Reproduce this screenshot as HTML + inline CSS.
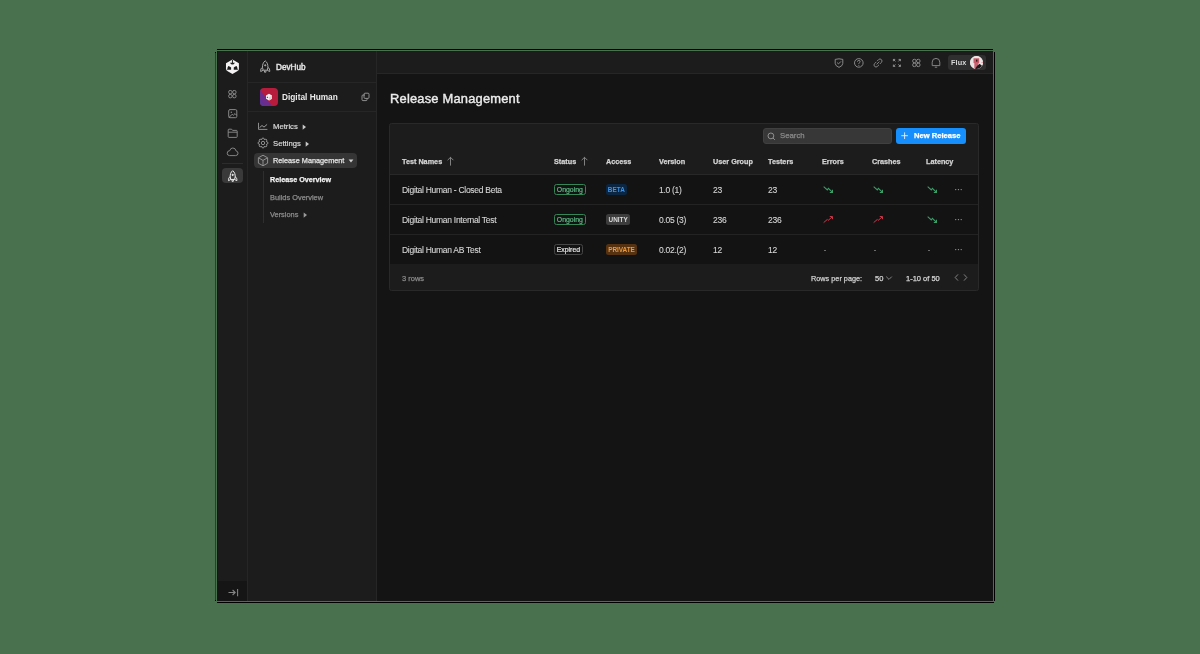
<!DOCTYPE html>
<html><head><meta charset="utf-8">
<style>
*{margin:0;padding:0;box-sizing:border-box}
html,body{width:1200px;height:654px;overflow:hidden;background:#49714d;font-family:"Liberation Sans",sans-serif;}
.a{position:absolute}
.ln{position:absolute;background:#000}
#panel{position:absolute;left:217px;top:51px;width:776px;height:550px;background:#1c1c1c;overflow:hidden}
.t{position:absolute;white-space:nowrap;line-height:1;will-change:transform;-webkit-text-stroke:0.25px currentColor}
svg{position:absolute;overflow:visible}
.hd{font-size:7.25px;font-weight:bold;color:#d4d4d4}
.rw{font-size:8.5px;letter-spacing:-0.28px;color:#d6d6d6;-webkit-text-stroke:0.1px currentColor}
.bd{position:absolute;border-radius:2.5px;font-size:6.9px;line-height:9px;text-align:center;white-space:nowrap;will-change:transform;-webkit-text-stroke:0.2px currentColor}
.bd2{position:absolute;border-radius:2.5px;font-size:6.4px;font-weight:bold;line-height:11px;text-align:center;white-space:nowrap;will-change:transform}
</style></head>
<body>
<!-- frame lines -->
<div class="ln" style="left:217px;top:49px;width:776px;height:1px"></div>
<div class="ln" style="left:217px;top:602px;width:777px;height:1px"></div>
<div class="ln" style="left:215px;top:52px;width:1px;height:549px;background:#383838"></div>
<div class="ln" style="left:215px;top:52px;width:1px;height:1px"></div>
<div class="ln" style="left:215px;top:600px;width:1px;height:1px"></div>
<div class="ln" style="left:994px;top:52px;width:1px;height:549px"></div>

<div id="panel">
  <!-- rail -->
  <div class="a" style="left:0;top:0;width:30px;height:550px;background:#1c1c1c"></div>
  <div class="a" style="left:30px;top:0;width:1px;height:550px;background:#262626"></div>
  <div class="a" style="left:0;top:530px;width:30px;height:20px;background:#151515"></div>
  <div class="a" style="left:0;top:0;width:1px;height:550px;background:#171717"></div>
  <div class="a" style="left:775px;top:0;width:1px;height:550px;background:#101010"></div>
  <!-- sidebar -->
  <div class="a" style="left:31px;top:0;width:128px;height:550px;background:#1c1c1c"></div>
  <div class="a" style="left:159px;top:0;width:1px;height:550px;background:#262626"></div>
  <div class="a" style="left:31px;top:31px;width:128px;height:1px;background:#262626"></div>
  <div class="a" style="left:31px;top:60px;width:128px;height:1px;background:#262626"></div>
  <!-- main -->
  <div class="a" style="left:160px;top:0;width:616px;height:550px;background:#141414"></div>
  <div class="a" style="left:160px;top:0;width:616px;height:22px;background:#1c1c1c"></div>
  <div class="a" style="left:160px;top:22px;width:616px;height:1px;background:#262626"></div>
</div>

<!-- ===== RAIL ICONS ===== -->
<svg class="a" style="left:222px;top:56px" width="22" height="22" viewBox="0 0 22 22">
  <path fill="#f4f2f2" fill-rule="evenodd" d="M10.44 3.6 L16.9 7.25 L16.9 14.15 L10.44 18.1 L3.98 14.15 L3.98 7.25 Z
   M9.95 3.9 L10.93 3.9 L10.93 6.7 L12.9 6.7 Q11.9 8.5 10.44 8.6 Q8.98 8.5 7.98 6.7 L9.95 6.7 Z
   M6.3 9.9 Q8.4 10.4 9.1 11.5 L9.1 13.7 L5.3 13.7 Q5.2 11.6 6.3 9.9 Z
   M14.58 9.9 Q12.48 10.4 11.78 11.5 L11.78 13.7 L15.58 13.7 Q15.68 11.6 14.58 9.9 Z"/>
  <path d="M5.6 13.6 L3.9 14.5 M15.28 13.6 L16.98 14.5" stroke="#1c1c1c" stroke-width="0.7"/>
</svg>
<svg class="a" style="left:227px;top:89px" width="11" height="11" viewBox="0 0 11 11" fill="none" stroke="#8e8e8e" stroke-width="0.95">
  <rect x="1.7" y="1.5" width="3.3" height="3.3" rx="1.3"/><rect x="5.7" y="1.5" width="3.3" height="3.3" rx="1.3"/>
  <rect x="1.7" y="5.5" width="3.3" height="3.3" rx="1.3"/><rect x="5.7" y="5.5" width="3.3" height="3.3" rx="1.3"/>
</svg>
<svg class="a" style="left:227px;top:108px" width="12" height="12" viewBox="0 0 12 12" fill="none" stroke="#8e8e8e" stroke-width="0.95">
  <rect x="1.7" y="1.6" width="8.1" height="8.1" rx="1.3"/>
  <path d="M2 9.4 L5.2 6.2 L6.4 7.2 L8 5.6 L9.6 7.2"/><circle cx="4.3" cy="4.2" r="0.7" fill="#8e8e8e" stroke="none"/>
</svg>
<svg class="a" style="left:227px;top:128px" width="12" height="11" viewBox="0 0 12 11" fill="none" stroke="#8e8e8e" stroke-width="0.9">
  <path d="M1.2 2 Q1.2 1.2 2 1.2 L4.6 1.2 L5.6 2.4 L9.4 2.4 Q10.2 2.4 10.2 3.2 L10.2 8.6 Q10.2 9.4 9.4 9.4 L2 9.4 Q1.2 9.4 1.2 8.6 Z"/>
  <path d="M1.2 4.2 L10.2 4.2"/>
</svg>
<svg class="a" style="left:226px;top:146px" width="13" height="11" viewBox="0 0 13 11" fill="none" stroke="#8e8e8e" stroke-width="0.9">
  <path d="M3.6 9.6 L9.6 9.6 Q12 9.6 12 7.2 Q12 5.2 10 4.9 Q9.6 2 6.8 2 Q4.4 2 3.8 4.6 Q1.2 4.8 1.2 7.2 Q1.2 9.6 3.6 9.6 Z"/>
</svg>
<div class="a" style="left:222px;top:163px;width:21px;height:1px;background:#2c2c2c"></div>
<div class="a" style="left:222px;top:168px;width:21px;height:15px;background:#3a3a3a;border-radius:4px"></div>
<svg class="a" style="left:226px;top:168.5px" width="13" height="14" viewBox="0 0 14 15" fill="none" stroke="#f2f2f2" stroke-width="1.05">
  <path d="M7.2 1.8 C9.4 3.4 10 6 9.9 8.4 L9.3 11.2 L5.1 11.2 L4.5 8.4 C4.4 6 5 3.4 7.2 1.8 Z"/>
  <path d="M4.6 8.2 C3.1 9 2.5 10.6 2.7 12.5 L5.1 11.3"/>
  <path d="M9.8 8.2 C11.3 9 11.9 10.6 11.7 12.5 L9.3 11.3"/>
  <circle cx="7.2" cy="6.3" r="0.7" fill="#f2f2f2"/>
  <path d="M6.5 11.6 L6.5 13.2 L7.9 13.2 L7.9 11.6"/>
</svg>
<svg class="a" style="left:226.5px;top:586.8px" width="13" height="11" viewBox="0 0 13 11" fill="none" stroke="#858585" stroke-width="1.05">
  <path d="M1.5 5.5 L8 5.5 M5.6 3 L8.2 5.5 L5.6 8"/><path d="M10.6 2 L10.6 9.2"/>
</svg>

<!-- ===== SIDEBAR ===== -->
<svg class="a" style="left:258px;top:59px" width="14" height="15" viewBox="0 0 14 15" fill="none" stroke="#b0b0b0" stroke-width="0.95">
  <path d="M7.2 1.8 C9.4 3.4 10 6 9.9 8.4 L9.3 11.2 L5.1 11.2 L4.5 8.4 C4.4 6 5 3.4 7.2 1.8 Z"/>
  <path d="M4.6 8.2 C3.1 9 2.5 10.6 2.7 12.5 L5.1 11.3"/>
  <path d="M9.8 8.2 C11.3 9 11.9 10.6 11.7 12.5 L9.3 11.3"/>
  <circle cx="7.2" cy="6.3" r="0.6" fill="#b0b0b0"/>
  <path d="M6.5 11.6 L6.5 13.2 L7.9 13.2 L7.9 11.6"/>
</svg>
<div class="t" style="left:275.5px;top:64.2px;font-size:8.2px;color:#e2e2e2;-webkit-text-stroke:0.45px #e2e2e2">DevHub</div>

<div class="a" style="left:260px;top:88px;width:18px;height:18px;border-radius:4px;overflow:hidden;background:#b81c3c">
  <svg width="18" height="18" viewBox="0 0 18 18" style="position:absolute;left:0;top:0">
    <polygon points="0,1.5 0,18 11.8,18" fill="#6b2c8c"/>
    <polygon points="0,11 0,18 5,18" fill="#4a3aa0" opacity="0.6"/>
    <polygon points="9,5.8 12,7.4 12,10.8 9,12.4 6,10.8 6,7.4" fill="#f6f0f0"/>
    <polygon points="9,9 12,7.4 12,10.8 9,12.4" fill="#e0d0d0"/>
    <path d="M7.6 8.4 Q6.6 8.6 6.6 9.6 Q7.4 10.4 8.2 9.8 Z" fill="#a81a36"/>
  </svg>
</div>
<div class="t" style="left:282px;top:93px;font-size:8.3px;font-weight:bold;color:#ececec;-webkit-text-stroke:0px">Digital Human</div>
<svg class="a" style="left:360px;top:92px" width="11" height="10" viewBox="0 0 11 10" fill="none" stroke="#9a9a9a" stroke-width="0.9">
  <path d="M5 3 L3 3 Q2 3 2 4 L2 7.6 Q2 8.6 3 8.6 L6 8.6 Q7 8.6 7 7.6 L7 6.4"/>
  <path d="M5 6.4 Q4 6.4 4 5.4 L4 2.2 Q4 1.2 5 1.2 L8 1.2 Q9 1.2 9 2.2 L9 5.4 Q9 6.4 8 6.4 Z"/>
</svg>

<svg class="a" style="left:257px;top:121px" width="12" height="10" viewBox="0 0 12 10" fill="none" stroke="#9a9a9a" stroke-width="0.9">
  <path d="M1.5 1.8 L1.5 8.4 L10.4 8.4"/><path d="M2.6 6.6 L5 4.5 L7 6.1 L10.1 3.4" stroke-width="1"/>
</svg>
<div class="t" style="left:273px;top:123.3px;font-size:7.7px;color:#dadada;-webkit-text-stroke:0.2px #dadada">Metrics</div>
<svg class="a" style="left:301.5px;top:123.6px" width="5" height="7" viewBox="0 0 5 7"><path d="M0.7 0.5 L4 3.1 L0.7 5.7 Z" fill="#c8c8c8"/></svg>

<svg class="a" style="left:257px;top:137px" width="12" height="12" viewBox="0 0 12 12" fill="none" stroke="#9a9a9a" stroke-width="0.9">
  <path stroke-linejoin="round" d="M10.84 5.23 L10.84 6.77 L9.78 6.97 L9.36 7.99 L9.96 8.88 L8.88 9.96 L7.99 9.36 L6.97 9.78 L6.77 10.84 L5.23 10.84 L5.03 9.78 L4.01 9.36 L3.12 9.96 L2.04 8.88 L2.64 7.99 L2.22 6.97 L1.16 6.77 L1.16 5.23 L2.22 5.03 L2.64 4.01 L2.04 3.12 L3.12 2.04 L4.01 2.64 L5.03 2.22 L5.23 1.16 L6.77 1.16 L6.97 2.22 L7.99 2.64 L8.88 2.04 L9.96 3.12 L9.36 4.01 L9.78 5.03 Z"/>
  <circle cx="6" cy="6" r="1.7"/>
</svg>
<div class="t" style="left:273px;top:140.3px;font-size:7.7px;color:#dadada;-webkit-text-stroke:0.2px #dadada">Settings</div>
<svg class="a" style="left:304.5px;top:140.6px" width="5" height="7" viewBox="0 0 5 7"><path d="M0.7 0.5 L4 3.1 L0.7 5.7 Z" fill="#c8c8c8"/></svg>

<div class="a" style="left:254px;top:153px;width:103px;height:15px;border-radius:4px;background:#353535"></div>
<svg class="a" style="left:257px;top:154px" width="12" height="13" viewBox="0 0 12 13" fill="none" stroke="#9a9a9a" stroke-width="0.9">
  <path d="M6 1.2 L10.6 3.8 L10.6 9.2 L6 11.8 L1.4 9.2 L1.4 3.8 Z"/>
  <path d="M1.6 3.9 L6 6.4 L10.4 3.9 M6 6.4 L6 11.6"/>
</svg>
<div class="t" style="left:272.8px;top:156.9px;font-size:7.3px;color:#e4e4e4">Release Management</div>
<svg class="a" style="left:347.5px;top:158.8px" width="6" height="4" viewBox="0 0 6 4"><path d="M0.6 0.6 L5.4 0.6 L3 3.4 Z" fill="#cfcfcf"/></svg>

<div class="a" style="left:263px;top:171px;width:1px;height:52px;background:#2e2e2e"></div>
<div class="t" style="left:269.7px;top:176.2px;font-size:7.2px;font-weight:bold;color:#f2f2f2">Release Overview</div>
<div class="t" style="left:269.7px;top:193.9px;font-size:7.4px;color:#8c8c8c">Builds Overview</div>
<div class="t" style="left:269.7px;top:211.2px;font-size:7.4px;color:#8c8c8c">Versions</div>
<svg class="a" style="left:302.5px;top:211.8px" width="5" height="7" viewBox="0 0 5 7"><path d="M0.7 0.5 L4 3.1 L0.7 5.7 Z" fill="#9a9a9a"/></svg>

<!-- ===== TOPBAR ===== -->
<svg class="a" style="left:833px;top:57px" width="12" height="12" viewBox="0 0 12 12" fill="none" stroke="#8e8e8e" stroke-width="0.95">
  <path d="M2.2 2.4 Q6 1.2 9.8 2.4 L9.8 6.4 Q9.8 8.8 6 10.4 Q2.2 8.8 2.2 6.4 Z"/><path d="M4.1 5.6 L5.5 6.9 L8 4.4"/>
</svg>
<svg class="a" style="left:853px;top:57px" width="12" height="12" viewBox="0 0 12 12" fill="none" stroke="#8e8e8e" stroke-width="0.95">
  <circle cx="5.8" cy="5.9" r="4.3"/><path d="M4.5 4.7 Q4.5 3.4 5.8 3.4 Q7.1 3.4 7.1 4.6 Q7.1 5.4 6.3 5.8 Q5.8 6.1 5.8 6.9"/><circle cx="5.8" cy="8.3" r="0.55" fill="#8e8e8e" stroke="none"/>
</svg>
<svg class="a" style="left:872px;top:57px" width="12" height="12" viewBox="0 0 12 12" fill="none" stroke="#8e8e8e" stroke-width="0.9">
  <path d="M5 4.2 L6.6 2.6 Q8 1.2 9.4 2.6 Q10.8 4 9.4 5.4 L7.8 7"/><path d="M7 7.8 L5.4 9.4 Q4 10.8 2.6 9.4 Q1.2 8 2.6 6.6 L4.2 5"/><path d="M4.6 7.4 L7.4 4.6"/>
</svg>
<svg class="a" style="left:892px;top:58px" width="10" height="10" viewBox="0 0 10 10" fill="none" stroke="#9a9a9a" stroke-width="0.9">
  <path d="M1.4 3.2 L1.4 1.4 L3.2 1.4 M1.4 1.4 L3.4 3.4"/><path d="M6.6 1.4 L8.4 1.4 L8.4 3.2 M8.4 1.4 L6.4 3.4"/>
  <path d="M1.4 6.6 L1.4 8.4 L3.2 8.4 M1.4 8.4 L3.4 6.4"/><path d="M6.6 8.4 L8.4 8.4 L8.4 6.6 M8.4 8.4 L6.4 6.4"/>
</svg>
<svg class="a" style="left:911px;top:58px" width="11" height="10" viewBox="0 0 11 10" fill="none" stroke="#8e8e8e" stroke-width="0.95">
  <rect x="1.7" y="1.3" width="3.4" height="3.4" rx="1.5"/><rect x="5.6" y="1.3" width="3.4" height="3.4" rx="1.5"/>
  <rect x="1.7" y="5.2" width="3.4" height="3.4" rx="1.5"/><rect x="5.6" y="5.2" width="3.4" height="3.4" rx="1.5"/>
</svg>
<svg class="a" style="left:930px;top:57px" width="12" height="12" viewBox="0 0 12 12" fill="none" stroke="#8e8e8e" stroke-width="0.9">
  <path d="M2.2 8.6 L2.2 5.2 Q2.2 1.4 6 1.4 Q9.8 1.4 9.8 5.2 L9.8 8.6 Z"/><path d="M4.8 10.2 L7.2 10.2"/>
</svg>
<div class="a" style="left:948px;top:55px;width:38px;height:15px;border-radius:3px;background:#2f2f2f"></div>
<div class="t" style="left:950.8px;top:59px;font-size:7.3px;letter-spacing:0.1px;font-weight:bold;color:#d8d8d8;-webkit-text-stroke:0px">Flux</div>
<div class="a" style="left:969.5px;top:55.6px;width:13.6px;height:13.6px;border-radius:50%;overflow:hidden;background:#ece6e6">
  <svg width="14" height="14" viewBox="0 0 14 14" style="position:absolute;left:0;top:0">
    <rect x="0" y="0" width="14" height="14" fill="#ebe4e4"/>
    <rect x="3.5" y="2.3" width="5.7" height="4.8" fill="#c65a68"/>
    <polygon points="4.3,7 8.6,7 7.6,11 5.4,13.6 4.3,13" fill="#c8606e"/>
    <polygon points="5,12.8 7.2,9.8 9.6,7.8 12.8,10.6 11.4,12.6 8,13.6" fill="#1e1a1a"/>
    <rect x="6" y="3.6" width="1.4" height="2" fill="#3a1818"/>
    <circle cx="12.1" cy="6.2" r="0.5" fill="#d04050"/>
  </svg>
</div>

<!-- ===== MAIN ===== -->
<div class="t" style="left:389.6px;top:92.7px;font-size:12.9px;letter-spacing:0.2px;color:#ececec;-webkit-text-stroke:0.4px #ececec">Release Management</div>

<div class="a" style="left:389px;top:123px;width:590px;height:168px;border:1px solid #292929;border-radius:2.5px;background:#1c1c1c;overflow:hidden">
  <div class="a" style="left:0;top:50px;width:588px;height:1px;background:#282828"></div>
  <div class="a" style="left:0;top:51px;width:588px;height:89px;background:#131313"></div>
  <div class="a" style="left:0;top:80px;width:588px;height:1px;background:#232323"></div>
  <div class="a" style="left:0;top:110px;width:588px;height:1px;background:#232323"></div>
</div>

<!-- toolbar -->
<div class="a" style="left:762.5px;top:128px;width:129.5px;height:16px;border:1px solid #404040;border-radius:3px;background:#373737"></div>
<svg class="a" style="left:766px;top:131px" width="11" height="11" viewBox="0 0 11 11" fill="none" stroke="#9a9a9a" stroke-width="0.9">
  <circle cx="4.9" cy="4.9" r="2.9"/><path d="M7 7 L8.9 8.9"/>
</svg>
<div class="t" style="left:779.6px;top:131.9px;font-size:7.8px;color:#8a8a8a">Search</div>
<div class="a" style="left:896px;top:128px;width:69.5px;height:16px;border-radius:3px;background:#168ffc"></div>
<svg class="a" style="left:900px;top:131px" width="10" height="10" viewBox="0 0 10 10" fill="none" stroke="#e8f2ff" stroke-width="0.9">
  <path d="M4.6 1.4 L4.6 8 M1.3 4.7 L7.9 4.7"/>
</svg>
<div class="t" style="left:913.6px;top:132px;font-size:7.6px;font-weight:bold;color:#ffffff">New Release</div>

<!-- header -->
<div class="t hd" style="left:402px;top:158px">Test Names</div>
<svg class="a" style="left:446px;top:156px" width="9" height="11" viewBox="0 0 9 11" fill="none" stroke="#9a9a9a" stroke-width="0.8">
  <path d="M4.5 1.4 L4.5 9.6 M1.6 4.2 L4.5 1.3 L7.4 4.2"/>
</svg>
<div class="t hd" style="left:554.3px;top:158px">Status</div>
<svg class="a" style="left:580px;top:156px" width="9" height="11" viewBox="0 0 9 11" fill="none" stroke="#9a9a9a" stroke-width="0.8">
  <path d="M4.5 1.4 L4.5 9.6 M1.6 4.2 L4.5 1.3 L7.4 4.2"/>
</svg>
<div class="t hd" style="left:605.7px;top:158px">Access</div>
<div class="t hd" style="left:659px;top:158px">Version</div>
<div class="t hd" style="left:713.3px;top:158px">User Group</div>
<div class="t hd" style="left:768px;top:158px">Testers</div>
<div class="t hd" style="left:822.4px;top:158px">Errors</div>
<div class="t hd" style="left:872.2px;top:158px">Crashes</div>
<div class="t hd" style="left:926.4px;top:158px">Latency</div>
<div class="t rw" style="left:401.7px;top:186.2px">Digital Human - Closed Beta</div>
<div class="a bd" style="left:554px;top:184.0px;width:31.7px;height:11px;border:1px solid #358556;color:#5cbc86;">Ongoing</div>
<div class="a bd2" style="left:606px;top:184.0px;width:20.6px;height:11px;background:#0a2643;color:#3b92e8;">BETA</div>
<div class="t rw" style="left:659px;top:186.2px">1.0 (1)</div>
<div class="t rw" style="left:713px;top:186.2px">23</div>
<div class="t rw" style="left:768px;top:186.2px">23</div>
<svg class="a" style="left:822.5px;top:185.3px" width="11" height="9" viewBox="0 0 10 8" fill="none" stroke="#3f9c68" stroke-width="1"><path d="M0.6 1.4 L3.9 4.4 L4.9 2.9 L8.4 6.4" /><path d="M6.2 6.7 L8.6 6.7 L8.6 4.3"/></svg>
<svg class="a" style="left:872.7px;top:185.3px" width="11" height="9" viewBox="0 0 10 8" fill="none" stroke="#3f9c68" stroke-width="1"><path d="M0.6 1.4 L3.9 4.4 L4.9 2.9 L8.4 6.4" /><path d="M6.2 6.7 L8.6 6.7 L8.6 4.3"/></svg>
<svg class="a" style="left:926.8px;top:185.3px" width="11" height="9" viewBox="0 0 10 8" fill="none" stroke="#3f9c68" stroke-width="1"><path d="M0.6 1.4 L3.9 4.4 L4.9 2.9 L8.4 6.4" /><path d="M6.2 6.7 L8.6 6.7 L8.6 4.3"/></svg>
<svg class="a" style="left:953.5px;top:187.5px" width="10" height="4" viewBox="0 0 10 4"><circle cx="1.7" cy="1.6" r="0.7" fill="#9a9a9a"/><circle cx="4.45" cy="1.6" r="0.7" fill="#9a9a9a"/><circle cx="7.2" cy="1.6" r="0.7" fill="#9a9a9a"/></svg>
<div class="t rw" style="left:401.7px;top:216.2px">Digital Human Internal Test</div>
<div class="a bd" style="left:554px;top:214.0px;width:31.7px;height:11px;border:1px solid #358556;color:#5cbc86;">Ongoing</div>
<div class="a bd2" style="left:606px;top:214.0px;width:24.3px;height:11px;background:#3c3c3c;color:#d8d8d8;">UNITY</div>
<div class="t rw" style="left:659px;top:216.2px">0.05 (3)</div>
<div class="t rw" style="left:713px;top:216.2px">236</div>
<div class="t rw" style="left:768px;top:216.2px">236</div>
<svg class="a" style="left:822.5px;top:215.3px" width="11" height="9" viewBox="0 0 10 8" fill="none" stroke="#c93a4c" stroke-width="0.9"><path d="M0.6 6.8 L3.9 4.0 L4.7 4.8 L8.4 1.6" /><path d="M6.2 1.3 L8.6 1.3 L8.6 3.7"/></svg>
<svg class="a" style="left:872.7px;top:215.3px" width="11" height="9" viewBox="0 0 10 8" fill="none" stroke="#c93a4c" stroke-width="0.9"><path d="M0.6 6.8 L3.9 4.0 L4.7 4.8 L8.4 1.6" /><path d="M6.2 1.3 L8.6 1.3 L8.6 3.7"/></svg>
<svg class="a" style="left:926.8px;top:215.3px" width="11" height="9" viewBox="0 0 10 8" fill="none" stroke="#3f9c68" stroke-width="1"><path d="M0.6 1.4 L3.9 4.4 L4.9 2.9 L8.4 6.4" /><path d="M6.2 6.7 L8.6 6.7 L8.6 4.3"/></svg>
<svg class="a" style="left:953.5px;top:217.5px" width="10" height="4" viewBox="0 0 10 4"><circle cx="1.7" cy="1.6" r="0.7" fill="#9a9a9a"/><circle cx="4.45" cy="1.6" r="0.7" fill="#9a9a9a"/><circle cx="7.2" cy="1.6" r="0.7" fill="#9a9a9a"/></svg>
<div class="t rw" style="left:401.7px;top:246.2px">Digital Human AB Test</div>
<div class="a bd" style="left:554px;top:244.0px;width:28.8px;height:11px;border:1px solid #474747;color:#e6e6e6;">Expired</div>
<div class="a bd2" style="left:606px;top:244.0px;width:31px;height:11px;background:#573211;color:#e99a3e;">PRIVATE</div>
<div class="t rw" style="left:659px;top:246.2px">0.02.(2)</div>
<div class="t rw" style="left:713px;top:246.2px">12</div>
<div class="t rw" style="left:768px;top:246.2px">12</div>
<div class="a" style="left:823.5px;top:249.5px;width:2.5px;height:1px;background:#6a6a6a"></div>
<div class="a" style="left:873.7px;top:249.5px;width:2.5px;height:1px;background:#6a6a6a"></div>
<div class="a" style="left:927.8px;top:249.5px;width:2.5px;height:1px;background:#6a6a6a"></div>
<svg class="a" style="left:953.5px;top:247.5px" width="10" height="4" viewBox="0 0 10 4"><circle cx="1.7" cy="1.6" r="0.7" fill="#9a9a9a"/><circle cx="4.45" cy="1.6" r="0.7" fill="#9a9a9a"/><circle cx="7.2" cy="1.6" r="0.7" fill="#9a9a9a"/></svg>

<!-- footer -->
<div class="t" style="left:401.8px;top:274.6px;font-size:7.5px;color:#8a8a8a">3 rows</div>
<div class="t" style="left:810.8px;top:274.6px;font-size:7.3px;color:#cfcfcf">Rows per page:</div>
<div class="t" style="left:875.2px;top:274.6px;font-size:7.5px;color:#d6d6d6">50</div>
<svg class="a" style="left:885px;top:275px" width="8" height="6" viewBox="0 0 8 6" fill="none" stroke="#a0a0a0" stroke-width="0.8"><path d="M1.2 1.6 L4 4.4 L6.8 1.6"/></svg>
<div class="t" style="left:906px;top:274.6px;font-size:7.5px;color:#d6d6d6">1-10 of 50</div>
<svg class="a" style="left:953px;top:273px" width="7" height="9" viewBox="0 0 7 9" fill="none" stroke="#9a9a9a" stroke-width="0.8"><path d="M5 1.4 L2.2 4.5 L5 7.6"/></svg>
<svg class="a" style="left:962px;top:273px" width="7" height="9" viewBox="0 0 7 9" fill="none" stroke="#9a9a9a" stroke-width="0.8"><path d="M2 1.4 L4.8 4.5 L2 7.6"/></svg>
</body></html>
